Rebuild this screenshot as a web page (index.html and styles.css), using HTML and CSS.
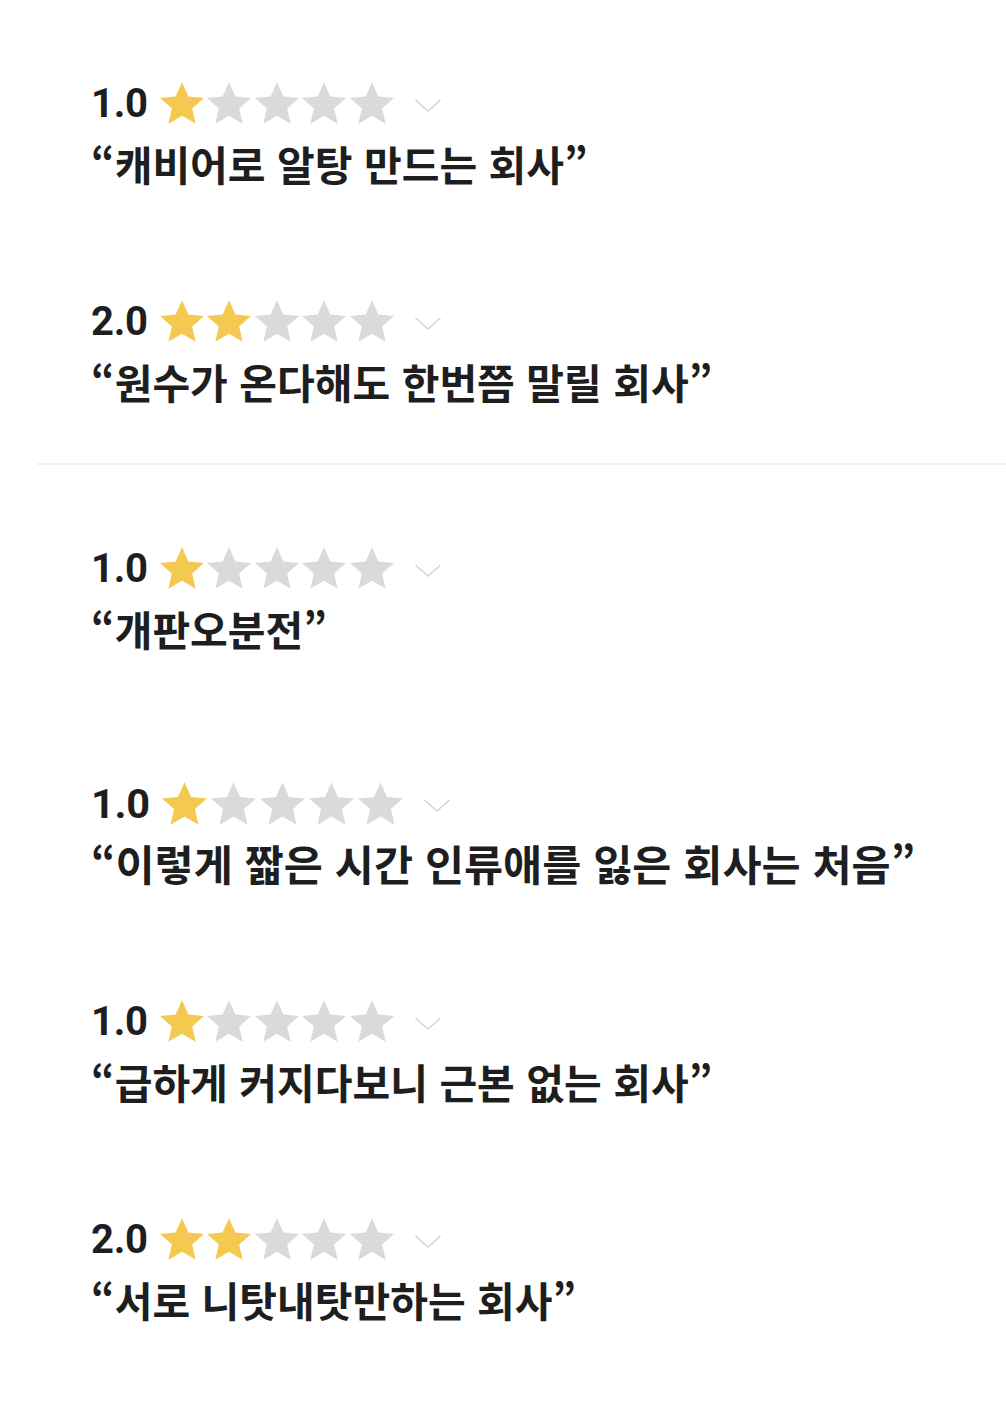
FILE: index.html
```html
<!DOCTYPE html>
<html lang="ko">
<head>
<meta charset="utf-8">
<link rel="stylesheet" href="styles.css">
</head>
<body>
<svg width="0" height="0" class="defs">
  <defs>
    <path id="star" d="M12 1.6l3.05 6.9 7.5.7-5.68 5 1.68 7.4L12 17.75 5.45 21.6l1.68-7.4-5.68-5 7.5-.7z"/>
    <path id="chev" d="M1.5 2l12.5 11 12.5-11"/>
  </defs>
</svg>
<main class="list">
  <section class="group">
    <article class="review">
      <div class="rating"><span class="score">1.0</span>
        <span class="stars">
          <svg class="star on" viewBox="1.45 1.6 21.1 20"><use href="#star"/></svg><svg class="star" viewBox="1.45 1.6 21.1 20"><use href="#star"/></svg><svg class="star" viewBox="1.45 1.6 21.1 20"><use href="#star"/></svg><svg class="star" viewBox="1.45 1.6 21.1 20"><use href="#star"/></svg><svg class="star" viewBox="1.45 1.6 21.1 20"><use href="#star"/></svg>
        </span>
        <svg class="chev" viewBox="0 0 28 15"><use href="#chev"/></svg>
      </div>
      <p class="quote">“캐비어로 알탕 만드는 회사”</p>
    </article>
    <article class="review">
      <div class="rating"><span class="score">2.0</span>
        <span class="stars">
          <svg class="star on" viewBox="1.45 1.6 21.1 20"><use href="#star"/></svg><svg class="star on" viewBox="1.45 1.6 21.1 20"><use href="#star"/></svg><svg class="star" viewBox="1.45 1.6 21.1 20"><use href="#star"/></svg><svg class="star" viewBox="1.45 1.6 21.1 20"><use href="#star"/></svg><svg class="star" viewBox="1.45 1.6 21.1 20"><use href="#star"/></svg>
        </span>
        <svg class="chev" viewBox="0 0 28 15"><use href="#chev"/></svg>
      </div>
      <p class="quote">“원수가 온다해도 한번쯤 말릴 회사”</p>
    </article>
  </section>
  <hr class="divider">
  <section class="group">
    <article class="review">
      <div class="rating"><span class="score">1.0</span>
        <span class="stars">
          <svg class="star on" viewBox="1.45 1.6 21.1 20"><use href="#star"/></svg><svg class="star" viewBox="1.45 1.6 21.1 20"><use href="#star"/></svg><svg class="star" viewBox="1.45 1.6 21.1 20"><use href="#star"/></svg><svg class="star" viewBox="1.45 1.6 21.1 20"><use href="#star"/></svg><svg class="star" viewBox="1.45 1.6 21.1 20"><use href="#star"/></svg>
        </span>
        <svg class="chev" viewBox="0 0 28 15"><use href="#chev"/></svg>
      </div>
      <p class="quote">“개판오분전”</p>
    </article>
    <article class="review review--big">
      <div class="rating"><span class="score">1.0</span>
        <span class="stars">
          <svg class="star on" viewBox="1.45 1.6 21.1 20"><use href="#star"/></svg><svg class="star" viewBox="1.45 1.6 21.1 20"><use href="#star"/></svg><svg class="star" viewBox="1.45 1.6 21.1 20"><use href="#star"/></svg><svg class="star" viewBox="1.45 1.6 21.1 20"><use href="#star"/></svg><svg class="star" viewBox="1.45 1.6 21.1 20"><use href="#star"/></svg>
        </span>
        <svg class="chev" viewBox="0 0 28 15"><use href="#chev"/></svg>
      </div>
      <p class="quote">“이렇게 짧은 시간 인류애를 잃은 회사는 처음”</p>
    </article>
    <article class="review">
      <div class="rating"><span class="score">1.0</span>
        <span class="stars">
          <svg class="star on" viewBox="1.45 1.6 21.1 20"><use href="#star"/></svg><svg class="star" viewBox="1.45 1.6 21.1 20"><use href="#star"/></svg><svg class="star" viewBox="1.45 1.6 21.1 20"><use href="#star"/></svg><svg class="star" viewBox="1.45 1.6 21.1 20"><use href="#star"/></svg><svg class="star" viewBox="1.45 1.6 21.1 20"><use href="#star"/></svg>
        </span>
        <svg class="chev" viewBox="0 0 28 15"><use href="#chev"/></svg>
      </div>
      <p class="quote">“급하게 커지다보니 근본 없는 회사”</p>
    </article>
    <article class="review">
      <div class="rating"><span class="score">2.0</span>
        <span class="stars">
          <svg class="star on" viewBox="1.45 1.6 21.1 20"><use href="#star"/></svg><svg class="star on" viewBox="1.45 1.6 21.1 20"><use href="#star"/></svg><svg class="star" viewBox="1.45 1.6 21.1 20"><use href="#star"/></svg><svg class="star" viewBox="1.45 1.6 21.1 20"><use href="#star"/></svg><svg class="star" viewBox="1.45 1.6 21.1 20"><use href="#star"/></svg>
        </span>
        <svg class="chev" viewBox="0 0 28 15"><use href="#chev"/></svg>
      </div>
      <p class="quote">“서로 니탓내탓만하는 회사”</p>
    </article>
  </section>
</main>
</body>
</html>
```
FILE: styles.css
```css
html, body {
  margin: 0;
  padding: 0;
  background: #ffffff;
}
body {
  font-family: Roboto, "Noto Sans CJK KR", sans-serif;
  color: #1e1e1e;
}
.defs {
  position: absolute;
  width: 0;
  height: 0;
}
.list {
  padding-top: 80px;
}
.group {
  display: flex;
  flex-direction: column;
  gap: 110px;
  padding-left: 91px;
}
.review {
  display: flex;
  flex-direction: column;
  gap: 12px;
}
.rating {
  display: flex;
  align-items: center;
  height: 46px;
}
.score {
  font-family: Roboto, sans-serif;
  font-weight: 700;
  font-size: 40px;
  letter-spacing: -0.3px;
  margin-right: 12px;
}
.stars {
  display: flex;
  gap: 3.5px;
}
.star {
  width: 44px;
  height: 42px;
  fill: #dadada;
}
.star.on {
  fill: #f3c94f;
}
.chev {
  width: 28px;
  height: 15px;
  margin-left: 20px;
  margin-top: 4px;
  fill: none;
  stroke: #d4d4d4;
  stroke-width: 1.5;
}
.quote {
  margin: 0;
  font-family: "Noto Sans CJK KR", sans-serif;
  font-weight: 700;
  font-size: 41px;
  line-height: 50px;
  letter-spacing: 0;
}
.divider {
  border: 0;
  height: 2px;
  background: #efefef;
  margin: 57px 0 80px 37px;
}
.review--big {
  margin-top: 17px;
}
.review--big .score {
  font-size: 41.5px;
}
.review--big .stars {
  gap: 4px;
}
.review--big .star {
  width: 45px;
  height: 43px;
}
.review--big .quote {
  font-size: 42.5px;
}
```
